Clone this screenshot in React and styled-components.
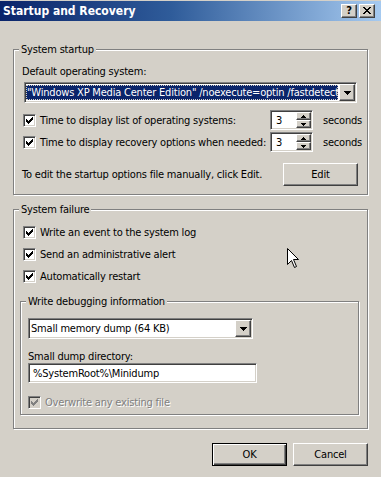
import React from 'react';
import styled, { createGlobalStyle, css } from 'styled-components';

const GlobalStyle = createGlobalStyle`
  html, body { margin: 0; padding: 0; background: #d4d0c8; }
  body {
    font-family: "DejaVu Sans Condensed", "Liberation Sans", sans-serif;
    font-size: 11px;
    line-height: 13px;
    letter-spacing: -0.2px;
    color: #000;
  }
  * { box-sizing: border-box; }
`;

const raised = css`
  border: 1px solid;
  border-color: #fff #404040 #404040 #fff;
  box-shadow: inset -1px -1px 0 #808080;
  background: #d4d0c8;
`;

const sunken = css`
  border: 1px solid;
  border-color: #808080 #fff #fff #808080;
  box-shadow: inset 1px 1px 0 #404040, inset -1px -1px 0 #d4d0c8;
`;

const Window = styled.div`
  position: relative;
  width: 381px;
  height: 477px;
  overflow: hidden;
  background: #d4d0c8;
  padding-top: 1px;
  display: flex;
  flex-direction: column;
`;

const TitleBar = styled.div`
  height: 20px;
  background: linear-gradient(to right, #0a246a 0%, #2f5c9a 45%, #a6caf0 100%);
  display: flex;
  align-items: center;
  justify-content: space-between;
  padding: 0 6px 0 3px;
`;

const TitleText = styled.div`
  color: #fff;
  font-weight: bold;
  font-size: 12px;
  letter-spacing: 0;
  white-space: nowrap;
`;

const CaptionButtons = styled.div`
  display: flex;
  gap: 2px;
`;

const CaptionButton = styled.div`
  ${raised};
  width: 16px;
  height: 14px;
  display: flex;
  align-items: center;
  justify-content: center;
  font-weight: bold;
  font-size: 11px;
  line-height: 12px;
  padding-bottom: 1px;
`;

const Content = styled.div`
  padding: 28px 13px 0 13px;
  display: flex;
  flex-direction: column;
`;

const Group = styled.div`
  position: relative;
  border: 1px solid #808080;
  box-shadow: inset 1px 1px 0 #fff, 1px 1px 0 #fff;
  display: flex;
  flex-direction: column;
  padding: ${p => p.$pad};
  margin-top: ${p => p.$mt || 0}px;
`;

const Legend = styled.span`
  position: absolute;
  top: -7px;
  left: 5px;
  padding: 0 2px;
  background: #d4d0c8;
  white-space: nowrap;
`;

const Label = styled.div`
  margin-top: ${p => p.$mt || 0}px;
  white-space: nowrap;
  height: 13px;
`;

const Combo = styled.div`
  ${sunken};
  background: #fff;
  height: 21px;
  width: ${p => p.$w}px;
  margin-top: ${p => p.$mt || 0}px;
  margin-left: ${p => p.$ml || 0}px;
  padding: 1px;
  display: flex;
  align-items: stretch;
`;

const ComboText = styled.div`
  flex: 1;
  min-width: 0;
  margin: 1px 1px 1px 0;
  padding-left: 1px;
  overflow: hidden;
  white-space: nowrap;
  display: flex;
  align-items: center;
  ${p => p.$selected && css`
    background: #0a246a;
    color: #fff;
    outline: 1px dotted #d4d0c8;
    outline-offset: -1px;
  `}
`;

const ArrowButton = styled.div`
  ${raised};
  flex: none;
  width: 16px;
  display: flex;
  align-items: center;
  justify-content: center;
`;

const OptionRow = styled.div`
  display: grid;
  grid-template-columns: 237px 43px auto;
  column-gap: 10px;
  align-items: center;
  height: 20px;
  margin-top: ${p => p.$mt || 0}px;
  margin-left: 1px;
`;

const CheckLabel = styled.label`
  display: flex;
  align-items: center;
  gap: 4px;
  white-space: nowrap;
  height: 13px;
  margin-top: ${p => p.$mt || 0}px;
  margin-left: ${p => p.$ml || 0}px;
  color: ${p => (p.$disabled ? '#808080' : '#000')};
  text-shadow: ${p => (p.$disabled ? '1px 1px 0 #fff' : 'none')};
`;

const Box = styled.span`
  ${sunken};
  flex: none;
  width: 13px;
  height: 13px;
  padding: 1px;
  background: ${p => (p.$disabled ? '#d4d0c8' : '#fff')};
  display: block;
  svg { display: block; }
`;

const Spinner = styled.div`
  ${sunken};
  background: #fff;
  height: 20px;
  padding: 1px;
  display: flex;
`;

const SpinValue = styled.div`
  flex: 1;
  padding-left: 4px;
  display: flex;
  align-items: center;
`;

const SpinButtons = styled.div`
  display: flex;
  flex-direction: column;
  width: 15px;
`;

const SpinButton = styled.div`
  ${raised};
  flex: 1;
  display: flex;
  align-items: center;
  justify-content: center;
`;

const Unit = styled.span`
  white-space: nowrap;
`;

const EditRow = styled.div`
  display: flex;
  align-items: center;
  justify-content: space-between;
  margin-top: 11px;
`;

const Button = styled.div`
  width: ${p => p.$w || 75}px;
  height: 23px;
  display: flex;
  align-items: center;
  justify-content: center;
  background: #d4d0c8;
  ${p => p.$default ? css`
    border: 1px solid #000;
    box-shadow: inset 1px 1px 0 #fff, inset -1px -1px 0 #404040, inset -2px -2px 0 #808080;
  ` : raised};
`;

const TextInput = styled.div`
  ${sunken};
  background: #fff;
  width: ${p => p.$w}px;
  height: 20px;
  padding: 0 4px;
  display: flex;
  align-items: center;
  white-space: nowrap;
`;

const Footer = styled.div`
  display: flex;
  justify-content: flex-end;
  gap: 6px;
  margin-top: 14px;
`;

const Cursor = styled.svg`
  position: absolute;
  left: 287px;
  top: 248px;
`;

const CHECK = 'M7 1h1v1h-1zM6 2h2v1h-2zM1 3h1v1h-1zM5 3h3v1h-3zM1 4h2v1h-2zM4 4h3v1h-3zM1 5h5v1h-5zM2 6h3v1h-3zM3 7h1v1h-1z';

function Check({ disabled }) {
  return (
    <Box $disabled={disabled}>
      <svg width="9" height="9" viewBox="0 0 9 9" shapeRendering="crispEdges">
        <path d={CHECK} fill={disabled ? '#808080' : '#000'} />
      </svg>
    </Box>
  );
}

function DownArrow() {
  return (
    <svg width="7" height="4" viewBox="0 0 7 4" shapeRendering="crispEdges">
      <path d="M0 0h7v1h-1v1h-1v1h-1v1h-1v-1h-1v-1h-1v-1h-1z" fill="#000" />
    </svg>
  );
}

function Spin({ value }) {
  return (
    <Spinner>
      <SpinValue>{value}</SpinValue>
      <SpinButtons>
        <SpinButton>
          <svg width="5" height="3" viewBox="0 0 5 3" shapeRendering="crispEdges">
            <path d="M2 0h1v1h1v1h1v1h-5v-1h1v-1h1z" fill="#000" />
          </svg>
        </SpinButton>
        <SpinButton>
          <svg width="5" height="3" viewBox="0 0 5 3" shapeRendering="crispEdges">
            <path d="M0 0h5v1h-1v1h-1v1h-1v-1h-1v-1h-1z" fill="#000" />
          </svg>
        </SpinButton>
      </SpinButtons>
    </Spinner>
  );
}

export default function App() {
  return (
    <>
      <GlobalStyle />
      <Window>
        <TitleBar>
          <TitleText>Startup and Recovery</TitleText>
          <CaptionButtons>
            <CaptionButton>?</CaptionButton>
            <CaptionButton>
              <svg width="8" height="7" viewBox="0 0 8 7" shapeRendering="crispEdges">
                <path d="M0 0h2v1h1v1h2v-1h1v-1h2v1h-1v1h-1v1h-1v1h1v1h1v1h1v1h-2v-1h-1v-1h-2v1h-1v1h-2v-1h1v-1h1v-1h1v-1h-1v-1h-1v-1h-1z" fill="#000" />
              </svg>
            </CaptionButton>
          </CaptionButtons>
        </TitleBar>

        <Content>
          <Group $pad="15px 9px 8px 8px">
            <Legend>System startup</Legend>
            <Label>Default operating system:</Label>
            <Combo $w={333} $mt={4} $ml={2}>
              <ComboText $selected>"Windows XP Media Center Edition" /noexecute=optin /fastdetect</ComboText>
              <ArrowButton><DownArrow /></ArrowButton>
            </Combo>
            <OptionRow $mt={7}>
              <CheckLabel><Check />Time to display list of operating systems:</CheckLabel>
              <Spin value="3" />
              <Unit>seconds</Unit>
            </OptionRow>
            <OptionRow $mt={2}>
              <CheckLabel><Check />Time to display recovery options when needed:</CheckLabel>
              <Spin value="3" />
              <Unit>seconds</Unit>
            </OptionRow>
            <EditRow>
              <span>To edit the startup options file manually, click Edit.</span>
              <Button $w={75}>Edit</Button>
            </EditRow>
          </Group>

          <Group $mt={14} $pad="16px 8px 13px 6px">
            <Legend>System failure</Legend>
            <CheckLabel $ml={3}><Check />Write an event to the system log</CheckLabel>
            <CheckLabel $ml={3} $mt={9}><Check />Send an administrative alert</CheckLabel>
            <CheckLabel $ml={3} $mt={9}><Check />Automatically restart</CheckLabel>
            <Group $mt={18} $pad="16px 8px 5px 7px">
              <Legend>Write debugging information</Legend>
              <Combo $w={225}>
                <ComboText>Small memory dump (64 KB)</ComboText>
                <ArrowButton><DownArrow /></ArrowButton>
              </Combo>
              <Label $mt={11}>Small dump directory:</Label>
              <TextInput $w={229}>%SystemRoot%\Minidump</TextInput>
              <CheckLabel $mt={13} $disabled><Check disabled />Overwrite any existing file</CheckLabel>
            </Group>
          </Group>

          <Footer>
            <Button $default>OK</Button>
            <Button>Cancel</Button>
          </Footer>
        </Content>

        <Cursor width="13" height="21" viewBox="0 0 13 21">
          <path d="M0.5 0.5 L0.5 16.5 L4.5 12.5 L7.5 19.5 L9.5 18.5 L6.5 11.5 L11.5 11.5 Z" fill="#fff" stroke="#000" strokeWidth="1" />
        </Cursor>
      </Window>
    </>
  );
}
